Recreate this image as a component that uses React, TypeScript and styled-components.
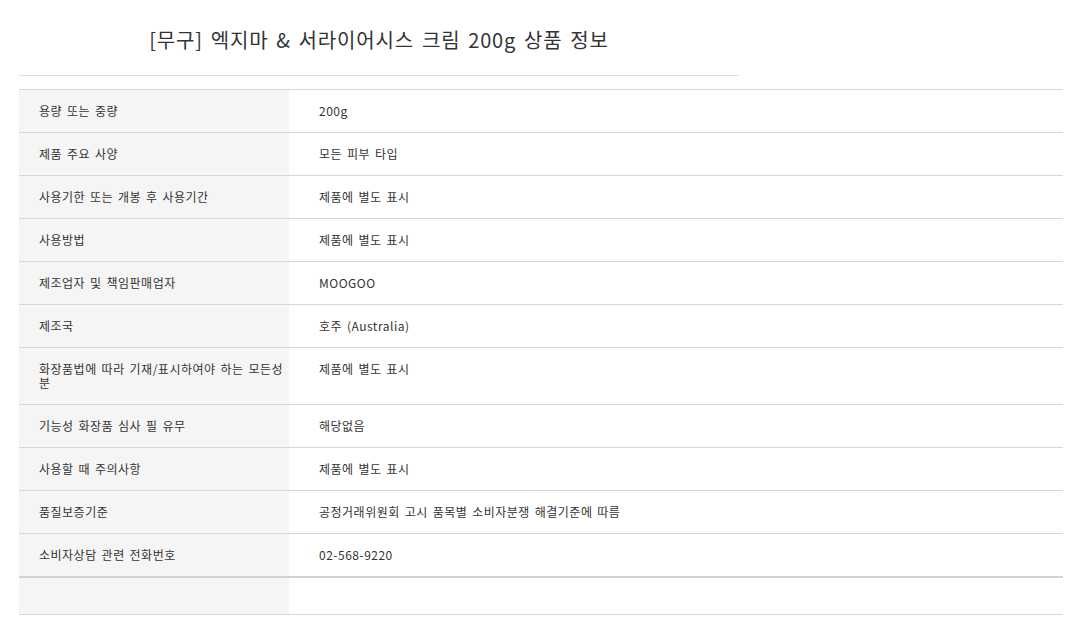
import styled, { createGlobalStyle } from "styled-components";

const GlobalStyle = createGlobalStyle`
  body {
    margin: 0;
    background: #fff;
    font-family: "Noto Sans CJK KR", "Noto Sans", sans-serif;
    color: #333;
  }
`;

const Page = styled.div`
  padding: 0 16px 0 19px;
`;

const Heading = styled.div`
  width: 720px;
  height: 76px;
  border-bottom: 1px solid #ddd;
  box-sizing: border-box;
  display: flex;
  justify-content: center;
  padding-top: 25px;

  h2 {
    margin: 0;
    font-size: 20px;
    font-weight: 400;
    line-height: 30px;
    color: #333;
    letter-spacing: 0.85px;
    word-spacing: 2.5px;
  }
`;

const Table = styled.table`
  width: 1044px;
  margin-top: 13px;
  border-collapse: collapse;
  border-top: 1px solid #d7d7d7;
  font-size: 12px;
  line-height: 14px;
  letter-spacing: 0.5px;
  word-spacing: 1.7px;

  tr {
    border-bottom: 1px solid #d7d7d7;
  }

  tr.last {
    border-top: 2px solid #d2d2d2;
  }

  th,
  td {
    vertical-align: top;
    text-align: left;
    font-weight: 400;
    padding: 14px 0;
  }

  th {
    width: 270px;
    box-sizing: border-box;
    background-color: #f5f5f5;
    padding-left: 20px;
    padding-right: 5px;
    word-break: break-all;
  }

  td {
    padding-left: 30px;
  }

  tr.last th,
  tr.last td {
    height: 8px;
  }
`;

const rows: [string, string][] = [
  ["용량 또는 중량", "200g"],
  ["제품 주요 사양", "모든 피부 타입"],
  ["사용기한 또는 개봉 후 사용기간", "제품에 별도 표시"],
  ["사용방법", "제품에 별도 표시"],
  ["제조업자 및 책임판매업자", "MOOGOO"],
  ["제조국", "호주 (Australia)"],
  ["화장품법에 따라 기재/표시하여야 하는 모든성분", "제품에 별도 표시"],
  ["기능성 화장품 심사 필 유무", "해당없음"],
  ["사용할 때 주의사항", "제품에 별도 표시"],
  ["품질보증기준", "공정거래위원회 고시 품목별 소비자분쟁 해결기준에 따름"],
  ["소비자상담 관련 전화번호", "02-568-9220"],
];

const App = () => {
  return (
    <Page>
      <GlobalStyle />
      <Heading>
        <h2>[무구] 엑지마 &amp; 서라이어시스 크림 200g 상품 정보</h2>
      </Heading>
      <Table>
        <tbody>
          {rows.map(([label, value], idx) => (
            <tr key={"row" + idx}>
              <th>{label}</th>
              <td>{value}</td>
            </tr>
          ))}
          <tr className='last'>
            <th></th>
            <td></td>
          </tr>
        </tbody>
      </Table>
    </Page>
  );
};

export default App;
